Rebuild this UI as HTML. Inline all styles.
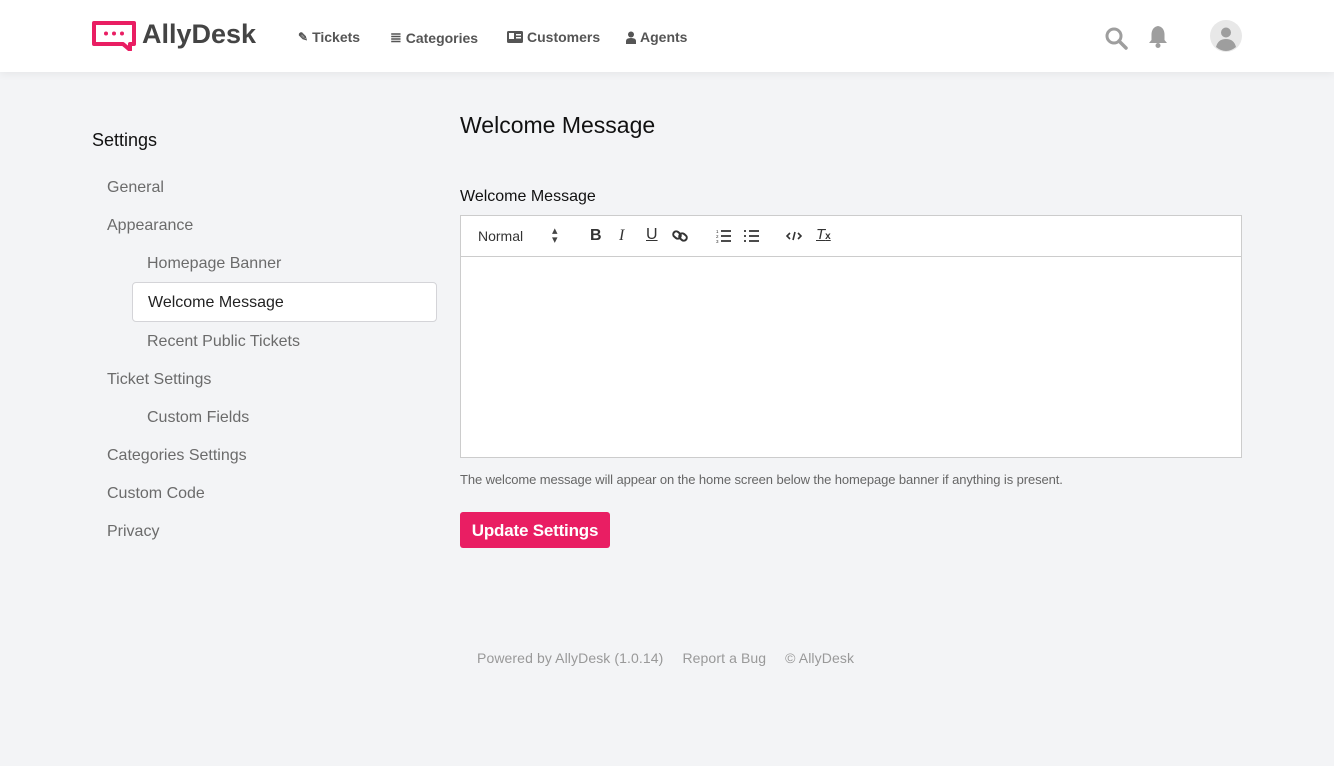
<!DOCTYPE html>
<html><head><meta charset="utf-8"><style>
*{box-sizing:border-box;margin:0;padding:0}
body{width:1334px;height:766px;background:#f3f4f6;font-family:"Liberation Sans",sans-serif;position:relative;overflow:hidden}
.hdr{position:absolute;left:0;top:0;width:1334px;height:72px;background:#fff;box-shadow:0 2px 8px rgba(0,0,0,.06)}
.abs{position:absolute}
.nav{position:absolute;top:29px;font-size:14px;font-weight:bold;color:#555;display:flex;align-items:center;gap:4px}
.side{position:absolute;font-size:16px;color:#6b6b6b}
.tb{position:absolute;font-size:15px;color:#333}
</style></head><body>
<div class="hdr">
<svg class="abs" style="left:92px;top:21px" width="44" height="30" viewBox="0 0 44 30"><path d="M2 2H42V23H38V29L31 23H2Z" fill="none" stroke="#e91e63" stroke-width="4" stroke-linejoin="round"/><circle cx="14" cy="12.5" r="2" fill="#e91e63"/><circle cx="22" cy="12.5" r="2" fill="#e91e63"/><circle cx="30" cy="12.5" r="2" fill="#e91e63"/></svg>
<div class="abs" style="left:142px;top:19px;font-size:27px;font-weight:bold;color:#444;letter-spacing:0">AllyDesk</div>
<div class="nav" style="left:298px"><span style="font-size:12px">✎</span>Tickets</div>
<div class="nav" style="left:390px"><span>≣</span>Categories</div>
<div class="nav" style="left:507px"><svg width="16" height="12"><rect width="16" height="12" rx="1.5" fill="#555"/><rect x="2" y="2" width="5" height="6" fill="#fff"/><rect x="9" y="3" width="5" height="1.5" fill="#fff"/><rect x="9" y="6" width="5" height="1.5" fill="#fff"/></svg>Customers</div>
<div class="nav" style="left:626px"><svg width="10" height="13"><circle cx="5" cy="3.5" r="3" fill="#555"/><path d="M0 13V10Q0 7 5 7Q10 7 10 10V13Z" fill="#555"/></svg>Agents</div>
<svg class="abs" style="left:1104px;top:26px" width="24" height="24"><circle cx="10" cy="10" r="7" fill="none" stroke="#9e9e9e" stroke-width="3"/><path d="M15 15L22 22" stroke="#9e9e9e" stroke-width="3.5" stroke-linecap="round"/></svg>
<svg class="abs" style="left:1146px;top:24px" width="24" height="25"><path d="M12 2Q6 3 5.5 10V16L3 19H21L18.5 16V10Q18 3 12 2Z" fill="#9e9e9e"/><circle cx="12" cy="21.5" r="2.5" fill="#9e9e9e"/></svg>
<svg class="abs" style="left:1210px;top:20px" width="32" height="32"><circle cx="16" cy="16" r="16" fill="#e8e8e8"/><circle cx="16" cy="12.5" r="5" fill="#9e9e9e"/><path d="M6 27Q8 19 16 19Q24 19 26 27Q21 31 16 31Q11 31 6 27Z" fill="#9e9e9e"/></svg>
</div>
<div class="abs" style="left:92px;top:130px;font-size:18px;color:#111">Settings</div>
<div class="side" style="left:107px;top:179px">General</div>
<div class="side" style="left:107px;top:217px">Appearance</div>
<div class="side" style="left:147px;top:255px">Homepage Banner</div>
<div class="abs" style="left:132px;top:282px;width:305px;height:40px;background:#fff;border:1px solid #d4d4d8;border-radius:4px"></div>
<div class="side" style="left:148px;top:294px;color:#222">Welcome Message</div>
<div class="side" style="left:147px;top:333px">Recent Public Tickets</div>
<div class="side" style="left:107px;top:371px">Ticket Settings</div>
<div class="side" style="left:147px;top:409px">Custom Fields</div>
<div class="side" style="left:107px;top:447px">Categories Settings</div>
<div class="side" style="left:107px;top:485px">Custom Code</div>
<div class="side" style="left:107px;top:523px">Privacy</div>
<div class="abs" style="left:460px;top:112px;font-size:23px;color:#111">Welcome Message</div>
<div class="abs" style="left:460px;top:188px;font-size:16px;color:#111">Welcome Message</div>
<div class="abs" style="left:460px;top:215px;width:782px;height:243px;background:#fff;border:1px solid #ccc"></div>
<div class="abs" style="left:461px;top:256px;width:780px;height:1px;background:#ccc"></div>
<div class="tb" style="left:478px;top:228px;font-size:14px">Normal</div>
<div class="tb" style="left:552px;top:227px;font-size:11px;color:#444;line-height:9px">▴<br>▾</div>
<div class="tb" style="left:590px;top:227px;font-weight:bold;font-size:16px">B</div>
<div class="tb" style="left:619px;top:227px;font-style:italic;font-size:16px;font-family:'Liberation Serif',serif">I</div>
<div class="tb" style="left:646px;top:226px;text-decoration:underline;font-size:16px">U</div>
<svg class="abs" style="left:672px;top:228px" width="16" height="16"><rect x="1" y="4" width="8" height="6" rx="3" transform="rotate(40 5 7)" fill="none" stroke="#333" stroke-width="2"/><rect x="7" y="6" width="8" height="6" rx="3" transform="rotate(40 11 9)" fill="none" stroke="#333" stroke-width="2"/></svg>
<svg class="abs" style="left:716px;top:229px" width="16" height="14"><text x="0" y="4" font-size="4.5" fill="#333">1</text><text x="0" y="9" font-size="4.5" fill="#333">2</text><text x="0" y="14" font-size="4.5" fill="#333">3</text><path d="M5 2H15M5 7H15M5 12H15" stroke="#333" stroke-width="1.8"/></svg>
<svg class="abs" style="left:744px;top:229px" width="16" height="14"><path d="M0 2H2M0 7H2M0 12H2M5 2H15M5 7H15M5 12H15" stroke="#333" stroke-width="1.8"/></svg>
<svg class="abs" style="left:786px;top:230px" width="16" height="12"><path d="M4 3L1 6L4 9M12 3L15 6L12 9M9 2L7 10" fill="none" stroke="#333" stroke-width="1.6"/></svg>
<div class="tb" style="left:816px;top:226px;font-style:italic;text-decoration:underline;font-size:15px">T<span style="font-size:10px;font-style:normal;font-weight:bold">x</span></div>
<div class="abs" style="left:460px;top:472px;font-size:13px;color:#666;letter-spacing:-.1px">The welcome message will appear on the home screen below the homepage banner if anything is present.</div>
<div class="abs" style="left:460px;top:512px;width:150px;height:36px;background:#e91e63;border-radius:3px;color:#fff;font-size:17px;font-weight:bold;text-align:center;line-height:37px;letter-spacing:-.2px">Update Settings</div>
<div class="abs" style="left:477px;top:650px;font-size:14px;color:#999;letter-spacing:.1px">Powered by AllyDesk (1.0.14)<span style="margin-left:19px">Report a Bug</span><span style="margin-left:19px">© AllyDesk</span></div>
</body></html>
